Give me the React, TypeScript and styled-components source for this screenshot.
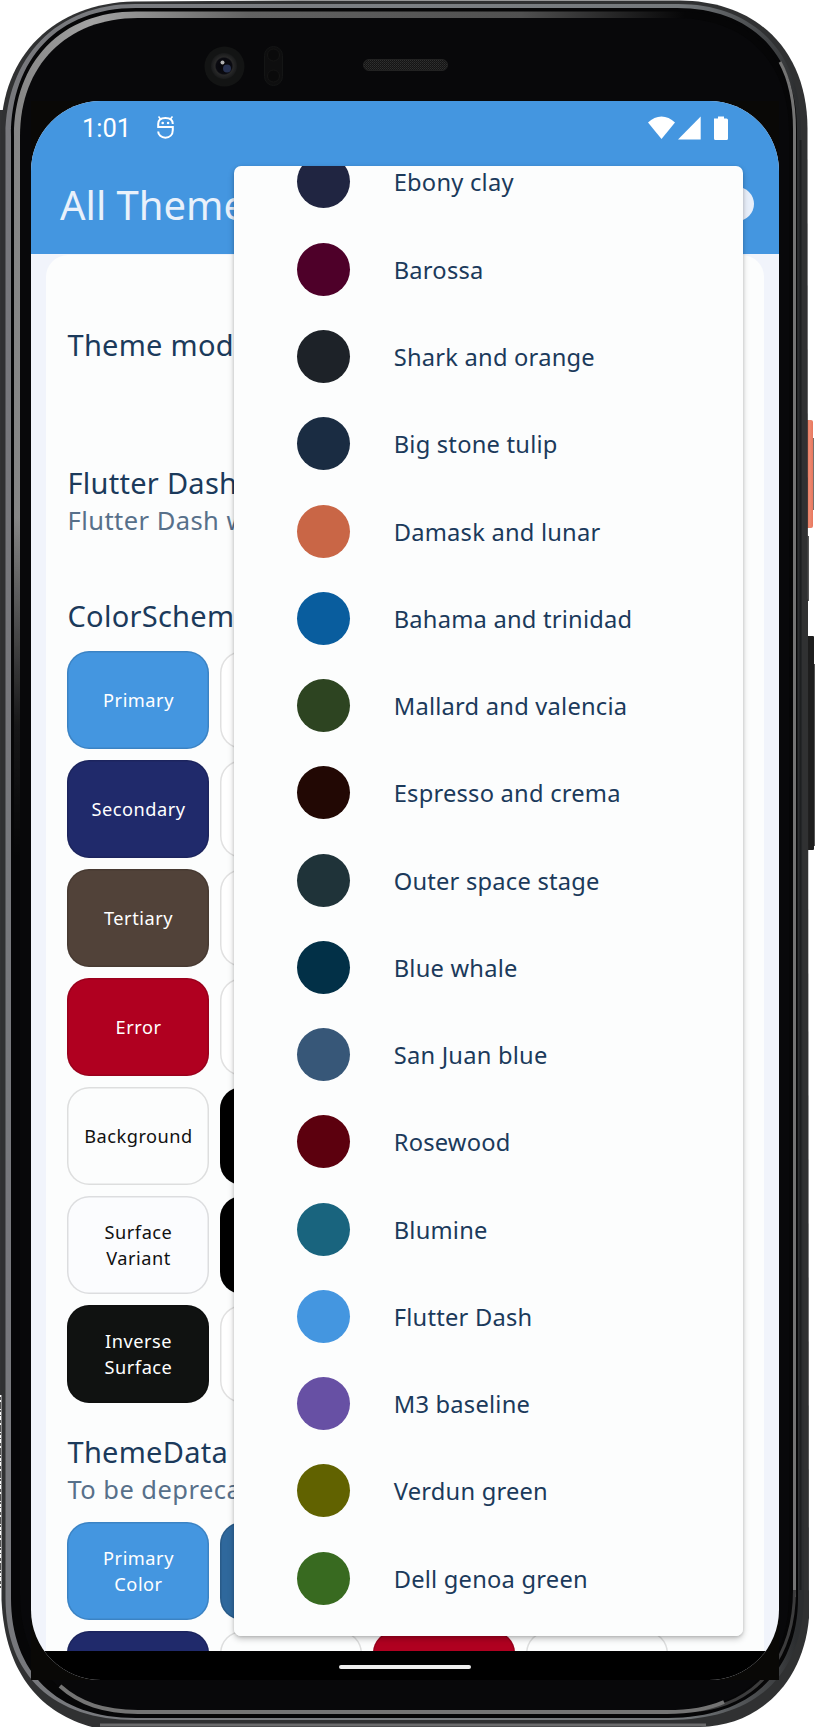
import React from 'react';
import styled, { createGlobalStyle } from 'styled-components';

const Global = createGlobalStyle`
  html, body { margin: 0; padding: 0; background: #fff; }
  body { width: 815px; height: 1727px; overflow: hidden; font-family: "Noto Sans", sans-serif; }
  * { box-sizing: border-box; }
`;

const Stage = styled.main`
  position: relative;
  width: 815px;
  height: 1727px;
  overflow: hidden;
`;

const Frame = styled.svg`
  position: absolute;
  inset: 0;
`;

const Screen = styled.section`
  position: relative;
  display: flex;
  flex-direction: column;
  width: 748px;
  height: 1579px;
  margin: 101px 0 0 31px;
  border-radius: 70px;
  overflow: hidden;
  background: #f1f4fb;
`;

const Header = styled.header`
  flex: none;
  height: 153px;
  background: #4496e0;
`;

const StatusBar = styled.div`
  display: flex;
  align-items: center;
  gap: 26px;
  height: 53px;
  padding: 0 51px 0 51px;
  color: #fff;
  font-family: Roboto, sans-serif;
  font-size: 25.5px;
`;

const StatusIcons = styled.div`
  margin-left: auto;
  display: flex;
`;

const Title = styled.h1`
  display: flex;
  align-items: center;
  height: 102px;
  margin: 0;
  padding: 0 22px 2px 29px;
  justify-content: space-between;
  font-size: 40px;
  font-weight: 400;
  color: #e9f1fb;
  white-space: nowrap;
`;

const Toggle = styled.span`
  width: 60px;
  height: 34px;
  border-radius: 17px;
  margin: -1px 3px 0 0;
  background: #e8effa;
`;

const Card = styled.div`
  flex: none;
  margin: 1px 15px 0;
  height: 1396px;
  border-radius: 22px 22px 0 0;
  background: #fcfdfd;
  padding: 0 21px;
  overflow: hidden;
`;

const Heading = styled.h2<{ $top: number }>`
  margin: 0;
  padding: ${(p) => p.$top}px 0 0 0.5px;
  font-size: 29px;
  font-weight: 400;
  line-height: 40px;
  letter-spacing: 0.27px;
  color: #1b3a5b;
  white-space: nowrap;
`;

const Caption = styled.p`
  margin: 0;
  padding-left: 0.5px;
  font-size: 25.5px;
  line-height: 35px;
  letter-spacing: 0.45px;
  color: #57708a;
  white-space: nowrap;
`;

const TileGrid = styled.div<{ $top: number }>`
  display: grid;
  grid-template-columns: repeat(4, 142px);
  grid-auto-rows: 98px;
  gap: 11px;
  margin-top: ${(p) => p.$top}px;
`;

const Tile = styled.div<{ $bg: string; $fg?: string }>`
  display: flex;
  align-items: center;
  justify-content: center;
  padding: 1px 0 0 1px;
  border-radius: 22px;
  background: ${(p) => p.$bg};
  color: ${(p) => p.$fg ?? '#fff'};
  box-shadow: inset 0 0 0 1.5px rgba(0, 0, 0, 0.12);
  font-size: 18.2px;
  line-height: 25.5px;
  letter-spacing: 0.52px;
  text-align: center;
  white-space: pre-line;
`;

const MenuShadow = styled.div`
  position: absolute;
  left: 203px;
  top: 65px;
  width: 509px;
  height: 1470px;
  border-radius: 7px;
  box-shadow: 0 3px 6px rgba(0, 0, 0, 0.22), 0 1px 3px rgba(0, 0, 0, 0.14);
`;

const Menu = styled.div`
  width: 100%;
  height: 100%;
  overflow: hidden;
  border-radius: 7px;
  background: #fcfdfd;
`;

const MenuList = styled.ul`
  list-style: none;
  margin: -27.7px 0 0;
  padding: 0;
`;

const MenuItem = styled.li`
  display: flex;
  align-items: center;
  height: 87.27px;
  padding-left: 63px;
  font-size: 23.7px;
  letter-spacing: 0.22px;
  color: #1b3a5b;
`;

const Swatch = styled.span<{ $color: string }>`
  width: 53px;
  height: 53px;
  margin-right: 43.7px;
  border-radius: 50%;
  background: ${(p) => p.$color};
`;

const ItemLabel = styled.span`
  padding-top: 1px;
`;

const NavBar = styled.div`
  flex: none;
  height: 29px;
  display: flex;
  justify-content: center;
  padding-top: 14px;
  background: #000;
`;

const NavHandle = styled.span`
  width: 132px;
  height: 4px;
  border-radius: 2px;
  background: #eee;
`;

const themes: [string, string][] = [
  ['Ebony clay', '#202541'],
  ['Barossa', '#4e0029'],
  ['Shark and orange', '#1d2228'],
  ['Big stone tulip', '#1a2c42'],
  ['Damask and lunar', '#c96646'],
  ['Bahama and trinidad', '#095d9e'],
  ['Mallard and valencia', '#2d4421'],
  ['Espresso and crema', '#220804'],
  ['Outer space stage', '#1f3339'],
  ['Blue whale', '#023047'],
  ['San Juan blue', '#375778'],
  ['Rosewood', '#5c000e'],
  ['Blumine', '#19647e'],
  ['Flutter Dash', '#4496e0'],
  ['M3 baseline', '#6750a4'],
  ['Verdun green', '#616200'],
  ['Dell genoa green', '#386a20'],
];

const schemeTiles: [string, string, string?][] = [
  ['Primary', '#4496e0'], ['', '#fff'], ['', '#b4e6ff'], ['', '#000'],
  ['Secondary', '#202a6b'], ['', '#fff'], ['', '#99ccf9'], ['', '#000'],
  ['Tertiary', '#514239'], ['', '#fff'], ['', '#baa99d'], ['', '#000'],
  ['Error', '#b00020'], ['', '#fff'], ['', '#fcd8df'], ['', '#000'],
  ['Background', '#fcfdfd', '#111'], ['', '#000'], ['', '#fcfdfd'], ['', '#000'],
  ['Surface\nVariant', '#fbfcfe', '#111'], ['', '#000'], ['', '#777'], ['', '#000'],
  ['Inverse\nSurface', '#101211'], ['', '#fff'], ['', '#aed4f8'], ['', '#4496e0'],
];

const dataTiles: [string, string, string?][] = [
  ['Primary\nColor', '#4496e0'], ['', '#2f689c'], ['', '#a8d0f5'], ['', '#202a6b'],
  ['', '#202a6b'], ['', '#fcfdfd'], ['', '#b00020'], ['', '#fcfdfd'],
];

const PhoneFrame = () => (
  <Frame width="815" height="1727" viewBox="0 0 815 1727">
    <defs>
      <linearGradient id="rim" x1="0" x2="1" y1="0" y2="0">
        <stop offset="0" stopColor="#77787c" />
        <stop offset="0.5" stopColor="#7b7f83" />
        <stop offset="0.85" stopColor="#74787b" />
        <stop offset="0.97" stopColor="#3c3e40" />
        <stop offset="0.99" stopColor="#2c2e30" />
      </linearGradient>
      <linearGradient id="bezel" gradientUnits="userSpaceOnUse" x1="14" x2="794" y1="0" y2="0">
        <stop offset="0" stopColor="#858585" />
        <stop offset="0.1" stopColor="#a3a3a3" />
        <stop offset="0.3" stopColor="#626262" />
        <stop offset="0.65" stopColor="#505050" />
        <stop offset="0.86" stopColor="#060607" />
      </linearGradient>
      <linearGradient id="fade" x1="0" x2="0" y1="0" y2="1">
        <stop offset="0" stopColor="#fff" />
        <stop offset="0.3" stopColor="#fff" />
        <stop offset="0.42" stopColor="#222" />
        <stop offset="0.5" stopColor="#000" />
      </linearGradient>
      <mask id="upper" maskUnits="userSpaceOnUse" x="0" y="0" width="815" height="1727">
        <rect width="815" height="1727" fill="url(#fade)" />
      </mask>
      <radialGradient id="lens">
        <stop offset="0" stopColor="#050509" />
        <stop offset="0.6" stopColor="#0a0a10" />
        <stop offset="0.7" stopColor="#282828" />
        <stop offset="1" stopColor="#191a1b" />
      </radialGradient>
      <linearGradient id="power" x1="0" x2="1" y1="0" y2="0">
        <stop offset="0.25" stopColor="#e06a4d" />
        <stop offset="0.6" stopColor="#ee8a72" />
        <stop offset="1" stopColor="#e8785e" />
      </linearGradient>
      <pattern id="mesh" width="2" height="2" patternUnits="userSpaceOnUse">
        <rect width="2" height="2" fill="#141414" />
        <rect width="1" height="1" fill="#303030" />
        <rect x="1" y="1" width="1" height="1" fill="#262626" />
      </pattern>
    </defs>
    <path d="M813.500 438V510" stroke="#77706d" />
    <rect x="804" y="420" width="9" height="108" rx="2" fill="url(#power)" />
    <rect x="804" y="636" width="10" height="214" rx="1" fill="#1d1d1d" />
    <path d="M814.500 664V846M808.500 536V601" stroke="#555" />
    <path d="M0 110H5V1395H0Z" fill="#323334" />
    <path d="M.500 1397V1588" stroke="#555" strokeDasharray="3 2 7 1 2 3 1 4" />
    <path d="M134 1.500L300 .5H680C756 1 807 49 807.500 128L809 1618C803 1685 757 1726 700 1727H92C44 1714 5 1677 1.500 1600L1 134C1 55 55 3 134 1.500Z" fill="#303132" />
    <path d="M135 4H678C753 4 801 52 801 129L804 1599C802 1676 755 1720 669 1720H135C54 1720 6 1676 5.500 1599V135C6 57 57 4 135 4Z" fill="url(#rim)" />
    <path d="M136 8H677C751 8 797 54 797 130L798 1598C798 1672 750 1718 668 1718H136C56 1718 11 1672 11 1598V136C11 59 58 8 136 8Z" fill="#060607" />
    <path d="M100 1725H706" stroke="#6b6b6c" strokeWidth="3" />
    <g mask="url(#upper)">
      <path d="M136 11.500H677C749 11.500 793 56 793 130L794 1598C794 1670 748 1713 668 1713H136C59 1713 14 1670 14 1598V136C14 62 61 11.500 136 11.500Z" fill="url(#bezel)" />
    </g>
    <path d="M138 18H676C744 18 789 60 789 132V1594C789 1667 746 1711 667 1711H138C64 1711 20 1667 20 1594V136C20 66 66 18 138 18Z" fill="#08080a" />
    <path d="M780 62C790 80 794.500 100 794.500 130V1597" fill="none" stroke="#747474" strokeWidth="3" />
    <path d="M794.500 1590C794.500 1655 760 1702 700 1710" fill="none" stroke="#3c3c3d" strokeWidth="3" />
    <path d="M60 1686C80 1704 104 1711.500 138 1712H667C690 1712 708 1709 724 1702" fill="none" stroke="#747474" strokeWidth="4" />
    <path d="M800.500 140V1590" stroke="#1d1f20" strokeWidth="2" />
    <rect x="31" y="101" width="748" height="1579" fill="#090806" />
    <circle cx="224.500" cy="66.500" r="20" fill="#131414" />
    <circle cx="224" cy="66" r="13" fill="url(#lens)" />
    <circle cx="227" cy="68.500" r="4" fill="#26304f" />
    <circle cx="222.500" cy="62.500" r="2" fill="#b4b4b4" />
    <rect x="264.500" y="46.500" width="18" height="39" rx="9" fill="#0e0e0f" stroke="#141515" />
    <circle cx="273.500" cy="55" r="6" fill="#0a0a0b" stroke="#151515" />
    <circle cx="273.500" cy="76" r="6" fill="#0a0a0b" stroke="#151515" />
    <rect x="363.500" y="59.500" width="84" height="11" rx="5.500" fill="url(#mesh)" stroke="#222" />
  </Frame>
);

const DebugIcon = () => (
  <svg width="17" height="23" viewBox="0 0 17 23" fill="none" stroke="#fff" strokeWidth="2">
    <path d="M1.500 .5l2.500 3M15.500 .5l-2.500 3" strokeWidth="1.600" />
    <path d="M15.800 8C15.800 4 12.800 2 8.400 2S1.200 4 1.200 8V11H15.800V14C15.800 18.800 12.600 21.700 8.400 21.700S1.200 18.800 1.200 15.500" />
    <circle cx="5.700" cy="7" r="1.300" fill="#fff" stroke="none" />
    <circle cx="11.100" cy="7" r="1.300" fill="#fff" stroke="none" />
  </svg>
);

export default function App() {
  return (
    <Stage>
      <Global />
      <PhoneFrame />
      <Screen>
        <Header>
          <StatusBar>
            <span>1:01</span>
            <DebugIcon />
            <StatusIcons>
              <svg width="80" height="24" viewBox="0 0 80 24" fill="#fff">
                <path d="M0 6.500C8-1.500 19-1.500 27 6.500L13.500 23Z" />
                <path d="M30 23.500L52.700 .5V23.500Z" />
                <path d="M66 2.500H70V.5H76V2.500H78.500Q80 2.500 80 4V22.500Q80 24 78.500 24H67.500Q66 24 66 22.500Z" />
              </svg>
            </StatusIcons>
          </StatusBar>
          <Title>All Themes <Toggle /></Title>
        </Header>
        <Card>
          <Heading $top={70}>Theme mode</Heading>
          <Heading $top={98}>Flutter Dash</Heading>
          <Caption>Flutter Dash wings</Caption>
          <Heading $top={58}>ColorScheme Colors</Heading>
          <TileGrid $top={15}>
            {schemeTiles.map(([label, bg, fg], i) => <Tile key={i} $bg={bg} $fg={fg}>{label}</Tile>)}
          </TileGrid>
          <Heading $top={29}>ThemeData Colors</Heading>
          <Caption>To be deprecated</Caption>
          <TileGrid $top={15}>
            {dataTiles.map(([label, bg, fg], i) => <Tile key={i} $bg={bg} $fg={fg}>{label}</Tile>)}
          </TileGrid>
        </Card>
        <NavBar><NavHandle /></NavBar>
        <MenuShadow>
          <Menu>
            <MenuList>
              {themes.map(([name, color]) => (
                <MenuItem key={name}><Swatch $color={color} /><ItemLabel>{name}</ItemLabel></MenuItem>
              ))}
            </MenuList>
          </Menu>
        </MenuShadow>
      </Screen>
    </Stage>
  );
}
